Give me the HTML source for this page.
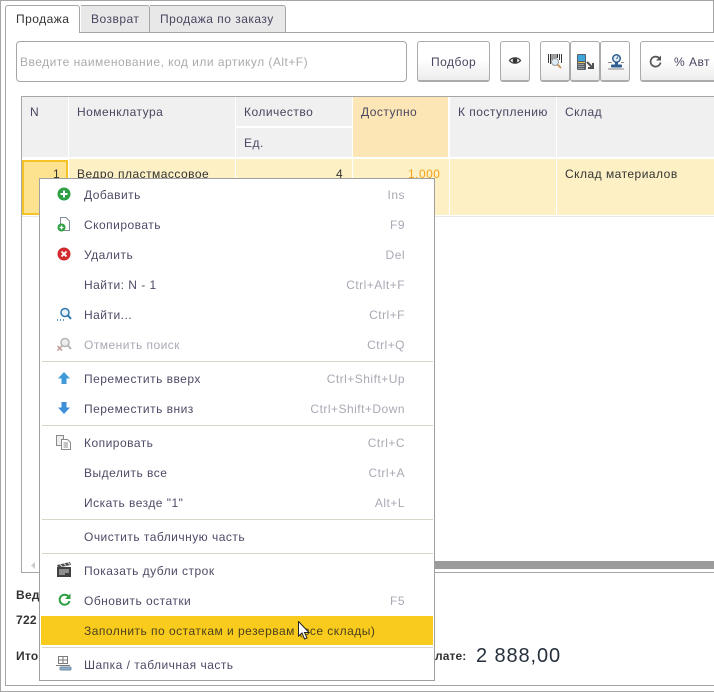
<!DOCTYPE html>
<html lang="ru"><head><meta charset="utf-8"><title>Продажа</title>
<style>
html,body{margin:0;padding:0;background:#fff}
#p{position:relative;width:714px;height:692px;overflow:hidden;background:#fff;font:12px/14px "Liberation Sans",Arial,sans-serif;color:#4a4560}
#p div,#p span.t,#p svg{position:absolute}
.t{position:absolute;white-space:nowrap;letter-spacing:.48px}
.l{background:#a6a6a6}
.h{background:#f0f0f0}
.b{box-sizing:border-box;border:1px solid #ababab;border-bottom:2px solid #ababab;border-radius:3px;background:linear-gradient(#fff 0,#fff 45%,#ececec 100%)}
.s{background:#d9d7ca;height:1px;left:42px;width:391px}
.k{color:#aaa8b4;text-align:right;right:309px}
.m{left:84px;color:#4f4a66}
</style></head><body><div id="p">
<!-- outer frames -->
<div class="l" style="left:0;top:0;width:714px;height:1px"></div>
<div class="l" style="left:0;top:0;width:1px;height:692px"></div>
<div class="l" style="left:713px;top:0;width:1px;height:33px"></div>
<div class="l" style="left:0;top:691px;width:714px;height:1px"></div>
<div class="l" style="left:5px;top:32px;width:1px;height:654px"></div>
<div class="l" style="left:5px;top:685px;width:709px;height:1px"></div>
<div class="l" style="left:80px;top:32px;width:634px;height:1px"></div>

<!-- tabs -->
<div style="left:5px;top:5px;width:75px;height:28px;box-sizing:border-box;border:1px solid #a6a6a6;border-bottom:0;border-radius:3px 3px 0 0;background:#fff"></div>
<div style="left:81px;top:5px;width:69px;height:27px;box-sizing:border-box;border:1px solid #a6a6a6;border-bottom:0;border-left:0;border-radius:0 3px 0 0;background:#e8e8e8"></div>
<div style="left:150px;top:5px;width:136px;height:27px;box-sizing:border-box;border:1px solid #a6a6a6;border-bottom:0;border-left:0;border-radius:0 3px 0 0;background:#e8e8e8"></div>
<span class="t" style="left:16px;top:12px;color:#333">Продажа</span>
<span class="t" style="left:91px;top:12px">Возврат</span>
<span class="t" style="left:160px;top:12px">Продажа по заказу</span>

<!-- toolbar -->
<div style="left:16px;top:41px;width:391px;height:41px;box-sizing:border-box;border:1px solid #a6a6a6;border-radius:4px;background:#fff"></div>
<span class="t" style="left:20px;top:55px;color:#aeaaaa">Введите наименование, код или артикул (Alt+F)</span>
<div class="b" style="left:417px;top:41px;width:73px;height:41px"></div>
<span class="t" style="left:431px;top:55px">Подбор</span>
<div class="b" style="left:500px;top:41px;width:30px;height:41px"></div>
<svg style="left:508px;top:55px" width="14" height="11" viewBox="0 0 14 11"><path d="M1.500 5.500C4 2 10 2 12.500 5.500C10 9 4 9 1.500 5.500Z" fill="#fff" stroke="#3a3a3a" stroke-width="1.300"/><circle cx="7" cy="5.500" r="2.400" fill="#333"/></svg>
<div class="b" style="left:540px;top:41px;width:30px;height:41px"></div>
<div class="b" style="left:570px;top:41px;width:30px;height:41px"></div>
<div class="b" style="left:600px;top:41px;width:30px;height:41px"></div>
<div class="b" style="left:640px;top:41px;width:80px;height:41px"></div>
<svg style="left:548px;top:54px" width="16" height="15" viewBox="0 0 16 15"><path d="M.5 0V9M2.500 0V10M4 0V7M6 0V5M8 0V4M9.500 0V4M11.500 0V6M13.500 0V9" stroke="#3a3a3a" stroke-width="1" fill="none"/><circle cx="7" cy="8" r="3.500" fill="#dcebf5" stroke="#9a9a9a"/><path d="M9.500 10.500L13 14" stroke="#c8914f" stroke-width="1.800"/></svg>
<svg style="left:577px;top:54px" width="18" height="16" viewBox="0 0 18 16"><rect x="0" y="0" width="9" height="16" rx="1" fill="#596168"/><rect x="1" y="1" width="7" height="6" fill="#3fa6dd"/><rect x="1" y="8" width="7" height="1" fill="#e8c04a"/><path d="M1.500 10.500H7.500M1.500 12.500H7.500M1.500 14.500H7.500" stroke="#d8d8d8" stroke-dasharray="1 1"/><path d="M10 8L15 13M16 9V14H11" stroke="#505050" stroke-width="2" fill="none"/></svg>
<svg style="left:608px;top:54px" width="16" height="16" viewBox="0 0 16 16"><circle cx="8.500" cy="4.500" r="4.500" fill="#2f5f91"/><circle cx="8.500" cy="4.500" r="3" fill="#e3ecf3"/><path d="M8.500 5L10 2.500" stroke="#2f5f91"/><rect x="7" y="8.500" width="3" height="2.500" fill="#2f5f91"/><rect x="3" y="10.500" width="11" height="3" rx="1" fill="#2f5f91"/><path d="M0 8.500H4M13 8.500H16M0 15H16" stroke="#8a8a8a"/></svg>
<svg style="left:649px;top:55px" width="13" height="13" viewBox="0 0 13 13"><path d="M10.500 3.500A5 5 0 1 0 11.500 7.500" fill="none" stroke="#555" stroke-width="1.700"/><path d="M12 .5V5.500H7Z" fill="#555"/></svg>
<span class="t" style="left:674px;top:55px">% Авт</span>

<!-- table -->
<div class="l" style="left:21px;top:96px;width:693px;height:1px"></div>
<div class="l" style="left:21px;top:96px;width:1px;height:477px"></div>
<div class="l" style="left:21px;top:572px;width:693px;height:1px"></div>
<div class="h" style="left:22px;top:97px;width:46px;height:60px"></div>
<div class="h" style="left:69px;top:97px;width:166px;height:60px"></div>
<div class="h" style="left:236px;top:97px;width:116px;height:29px"></div>
<div class="h" style="left:236px;top:128px;width:116px;height:29px"></div>
<div style="left:353px;top:97px;width:95px;height:60px;background:#fde6b5"></div>
<div class="h" style="left:450px;top:97px;width:106px;height:60px"></div>
<div class="h" style="left:557px;top:97px;width:157px;height:60px"></div>
<span class="t" style="left:30px;top:105px">N</span>
<span class="t" style="left:77px;top:105px">Номенклатура</span>
<span class="t" style="left:244px;top:105px">Количество</span>
<span class="t" style="left:244px;top:136px">Ед.</span>
<span class="t" style="left:361px;top:105px">Доступно</span>
<span class="t" style="left:458px;top:105px">К поступлению</span>
<span class="t" style="left:565px;top:105px">Склад</span>
<!-- row -->
<div style="left:69px;top:159px;width:166px;height:56px;background:#fdf0c5"></div>
<div style="left:236px;top:159px;width:116px;height:56px;background:#fdf0c5"></div>
<div style="left:353px;top:159px;width:96px;height:56px;background:#fdf0c5"></div>
<div style="left:450px;top:159px;width:106px;height:56px;background:#fdf0c5"></div>
<div style="left:557px;top:159px;width:157px;height:56px;background:#fdf0c5"></div>
<div style="left:22px;top:160px;width:46px;height:55px;box-sizing:border-box;border:2px solid #f6c326;background:#fde28f"></div>
<div style="left:22px;top:216px;width:692px;height:1px;background:#e8e8e8"></div>
<span class="t" style="left:53px;top:167px;color:#333">1</span>
<span class="t" style="left:77px;top:167px;color:#333">Ведро пластмассовое</span>
<span class="t" style="left:336px;top:167px;color:#333">4</span>
<span class="t" style="left:408px;top:167px;color:#f5a21b">1,000</span>
<span class="t" style="left:565px;top:167px;color:#333">Склад материалов</span>
<!-- scrollbar -->
<svg style="left:31px;top:562px" width="5" height="7" viewBox="0 0 5 7"><path d="M4 0V7L0 3.500Z" fill="#ccc"/></svg>
<div style="left:434px;top:561px;width:280px;height:8px;background:#9b9b9b"></div>

<!-- bottom -->
<span class="t" style="left:16px;top:588px;font-weight:bold;color:#333;letter-spacing:.28px">Ведомость</span>
<span class="t" style="left:16px;top:613px;font-weight:bold;color:#333;letter-spacing:.28px">722</span>
<span class="t" style="left:16px;top:649px;font-weight:bold;color:#333;letter-spacing:.28px">Итого к оплате:</span>
<span class="t" style="left:435px;top:649px;font-weight:bold;color:#333;letter-spacing:.1px">лате:</span>
<span class="t" style="left:476px;top:644px;font-size:20px;line-height:24px;color:#26303c;letter-spacing:.9px">2 888,00</span>

<!-- menu -->
<div style="left:39px;top:178px;width:396px;height:503px;box-sizing:border-box;border:1px solid #a0a0a0;background:#fff"></div>
<div class="s" style="top:361px"></div>
<div class="s" style="top:425px"></div>
<div class="s" style="top:519px"></div>
<div class="s" style="top:553px"></div>
<div class="s" style="top:647px"></div>
<div style="left:41px;top:616px;width:392px;height:29px;background:#f9cb1c"></div>

<span class="t m" style="top:188px">Добавить</span><span class="t k" style="top:188px">Ins</span>
<span class="t m" style="top:218px">Скопировать</span><span class="t k" style="top:218px">F9</span>
<span class="t m" style="top:248px">Удалить</span><span class="t k" style="top:248px">Del</span>
<span class="t m" style="top:278px">Найти: N - 1</span><span class="t k" style="top:278px">Ctrl+Alt+F</span>
<span class="t m" style="top:308px">Найти...</span><span class="t k" style="top:308px">Ctrl+F</span>
<span class="t m" style="top:338px;color:#aaa8b4">Отменить поиск</span><span class="t k" style="top:338px">Ctrl+Q</span>
<span class="t m" style="top:372px">Переместить вверх</span><span class="t k" style="top:372px">Ctrl+Shift+Up</span>
<span class="t m" style="top:402px">Переместить вниз</span><span class="t k" style="top:402px">Ctrl+Shift+Down</span>
<span class="t m" style="top:436px">Копировать</span><span class="t k" style="top:436px">Ctrl+C</span>
<span class="t m" style="top:466px">Выделить все</span><span class="t k" style="top:466px">Ctrl+A</span>
<span class="t m" style="top:496px">Искать везде "1"</span><span class="t k" style="top:496px">Alt+L</span>
<span class="t m" style="top:530px">Очистить табличную часть</span>
<span class="t m" style="top:564px">Показать дубли строк</span>
<span class="t m" style="top:594px">Обновить остатки</span><span class="t k" style="top:594px">F5</span>
<span class="t m" style="top:624px;color:#4a3f20">Заполнить по остаткам и резервам (все склады)</span>
<span class="t m" style="top:658px">Шапка / табличная часть</span>

<!-- menu icons -->
<svg style="left:57px;top:187px" width="14" height="14" viewBox="0 0 14 14"><circle cx="7" cy="7" r="6.500" fill="#2ea043"/><path d="M7 3.500V10.500M3.500 7H10.500" stroke="#fff" stroke-width="2"/></svg>
<svg style="left:57px;top:217px" width="14" height="15" viewBox="0 0 14 15"><path d="M3.500 .5H9L12.500 4V13.500H3.500Z" fill="#fff" stroke="#7f8c99"/><circle cx="4.500" cy="10.500" r="4" fill="#2ea043"/><path d="M4.500 8.500V12.500M2.500 10.500H6.500" stroke="#fff" stroke-width="1.300"/></svg>
<svg style="left:57px;top:247px" width="14" height="14" viewBox="0 0 14 14"><circle cx="7" cy="7" r="6.500" fill="#d32a2f"/><path d="M4.500 4.500L9.500 9.500M9.500 4.500L4.500 9.500" stroke="#fff" stroke-width="1.800"/></svg>
<svg style="left:56px;top:307px" width="16" height="15" viewBox="0 0 16 15"><circle cx="9" cy="5.500" r="4" fill="#e8f2fa" stroke="#2f77ad" stroke-width="1.500"/><path d="M12 8.500L15 12" stroke="#2f77ad" stroke-width="2"/><path d="M1 13H2M4 13H5M7 13H8" stroke="#2f77ad" stroke-width="1.500"/></svg>
<svg style="left:56px;top:337px" width="16" height="15" viewBox="0 0 16 15"><circle cx="9" cy="5.500" r="4" fill="#eee" stroke="#b5b5b5" stroke-width="1.500"/><path d="M12 8.500L15 12" stroke="#b5b5b5" stroke-width="2"/><path d="M1.500 9L6 13.500M6 9L1.500 13.500" stroke="#c09a9a" stroke-width="1.500"/></svg>
<svg style="left:57px;top:371px" width="14" height="14" viewBox="0 0 14 14"><path d="M7 1L13 7.500H9.500V13H4.500V7.500H1Z" fill="#3f9bd8"/></svg>
<svg style="left:57px;top:401px" width="14" height="14" viewBox="0 0 14 14"><path d="M7 13L13 6.500H9.500V1H4.500V6.500H1Z" fill="#3f8fd8"/></svg>
<svg style="left:56px;top:435px" width="16" height="15" viewBox="0 0 16 15"><path d="M.5 .5H7.500V10.500H.5Z" fill="#eee" stroke="#8a8a8a"/><path d="M5.500 4.500H11.500L14.500 7.500V14.500H5.500Z" fill="#fff" stroke="#8a8a8a"/><path d="M7.500 8H12M7.500 10H12M7.500 12H12" stroke="#8a8a8a"/></svg>
<svg style="left:57px;top:562px" width="14" height="15" viewBox="0 0 14 15"><rect x="0" y="5" width="14" height="10" fill="#404040"/><path d="M0 3L13 0L14 3L1 5.500Z" fill="#505050"/><path d="M3 2.500L5 4.500M7 1.500L9 3.500M11 .5L13 2.500" stroke="#ddd"/><path d="M2 8H12M2 10H12M2 12H8" stroke="#ddd"/></svg>
<svg style="left:58px;top:593px" width="13" height="14" viewBox="0 0 13 14"><path d="M10.500 3.500A5 5 0 1 0 11.500 8" fill="none" stroke="#2ea043" stroke-width="2"/><path d="M12.500 .5V6H7Z" fill="#2ea043"/></svg>
<svg style="left:56px;top:656px" width="16" height="16" viewBox="0 0 16 16"><path d="M2.500 .5H11.500V7.500H2.500ZM7 .5V7.500M2.500 4H11.500" fill="#fff" stroke="#7a7a7a"/><path d="M0 9.500H14" stroke="#7a7a7a"/><rect x="4" y="11" width="11" height="3" rx="1" fill="#8fb0cc" stroke="#6d8ba5"/></svg>

<!-- cursor -->
<svg style="left:298px;top:621px" width="14" height="20" viewBox="0 0 14 20"><path d="M.5 .5V15L4 12L6.500 18L9 17L6.500 11.500H11Z" fill="#fff" stroke="#222" stroke-width="1"/></svg>
</div></body></html>
